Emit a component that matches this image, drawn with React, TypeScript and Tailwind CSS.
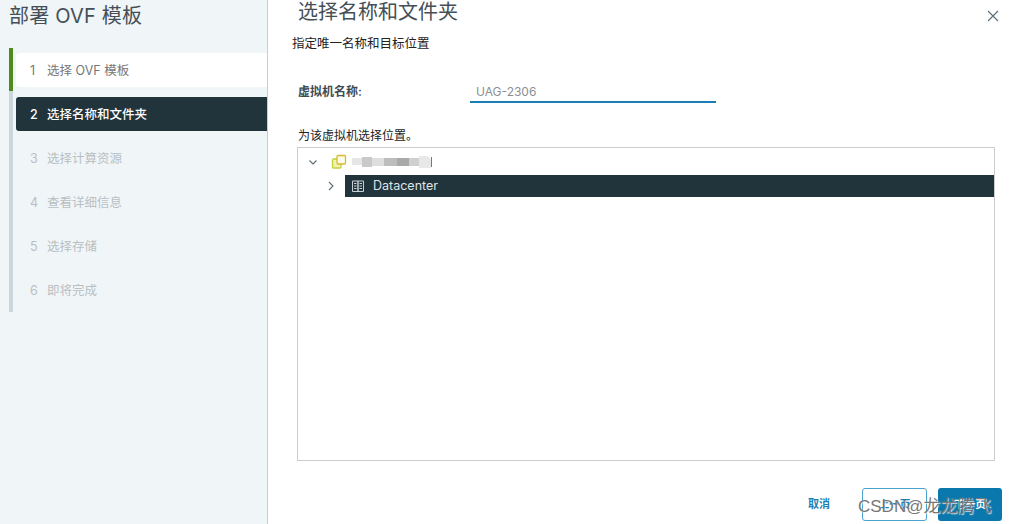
import React from "react";

const font = { fontFamily: 'Inter, "Noto Sans CJK SC", sans-serif' };

function Step({ n, label, state }: { n: number; label: string; state: "done" | "active" | "todo" }) {
  const box =
    state === "active"
      ? "bg-[#21333b] text-white font-medium rounded-l-[3px]"
      : state === "done"
      ? "bg-white text-[#777777] rounded-l-[3px]"
      : "text-[#b9bfc3]";
  return (
    <div className={`h-[34px] flex items-center pl-[14px] pt-[2px] text-[12.5px] leading-none ${box}`}>
      <span className="w-[17px]">{n}</span>
      <span>{label}</span>
    </div>
  );
}

export default function App() {
  return (
    <div style={font} className="relative w-[1010px] h-[524px] overflow-hidden bg-white flex text-[#222222]">
      <aside className="w-[268px] h-full shrink-0 bg-[#f0f5f8] border-r border-[#c5ced4] flex flex-col pl-[9px]">
        <h1 className="mt-[2px] h-[28px] text-[20px] leading-[28px] font-normal tracking-[0.2px] text-[#444f56] whitespace-nowrap">部署 OVF 模板</h1>
        <div className="mt-[18px] flex h-[264px]">
          <div className="w-[4px] h-full bg-[#ccd6db] flex flex-col">
            <div className="h-[43px] bg-[#4e8a1c]" />
          </div>
          <div className="ml-[3px] flex-1 pt-[5px] flex flex-col gap-[10px]">
            <Step n={1} label="选择 OVF 模板" state="done" />
            <Step n={2} label="选择名称和文件夹" state="active" />
            <Step n={3} label="选择计算资源" state="todo" />
            <Step n={4} label="查看详细信息" state="todo" />
            <Step n={5} label="选择存储" state="todo" />
            <Step n={6} label="即将完成" state="todo" />
          </div>
        </div>
      </aside>

      <main className="flex-1 flex flex-col min-w-0 pl-[24px] pr-[16px]">
        <div className="flex items-start justify-between h-[26px] pl-[6px]">
          <h2 className="text-[20px] leading-[24px] font-normal text-[#444f56] whitespace-nowrap">选择名称和文件夹</h2>
          <svg width="12" height="12" viewBox="0 0 12 12" className="mt-[10px] mr-[-5px] text-[#5f7078]" fill="none" stroke="currentColor" strokeWidth="1.2">
            <path d="M1 1l10 10M11 1L1 11" />
          </svg>
        </div>
        <p className="mt-[11px] text-[12.5px] leading-[14px] text-[#222222]">指定唯一名称和目标位置</p>
        <div className="mt-[34px] flex items-start pl-[6px]">
          <label className="w-[172px] text-[12px] leading-[14px] font-semibold text-[#404b52]">虚拟机名称:</label>
          <div className="w-[246px] h-[21px] border-b-2 border-[#1a7fb5] -mt-[3px] pl-[6px] text-[12px] leading-[20px] text-[#8a8f93]">UAG-2306</div>
        </div>
        <p className="mt-[26px] pl-[6px] text-[12px] leading-[14px] text-[#222222]">为该虚拟机选择位置。</p>
        <div className="mt-[4px] ml-[5px] w-[698px] h-[314px] border border-[#cccccc]">
          <div className="h-[27px] flex items-center pl-[10px]">
            <svg width="10" height="10" viewBox="0 0 10 10" fill="none" stroke="#5f6b72" strokeWidth="1.1"><path d="M1.5 3.5L5 7l3.5-3.5" /></svg>
            <svg width="16" height="16" viewBox="0 0 16 16" fill="none" className="ml-[13px]">
              <rect x="1.5" y="5" width="8.5" height="9" rx="1" fill="#eef3b0" stroke="#c3cf3e" strokeWidth="1.3" />
              <rect x="6" y="1.5" width="8.5" height="8.5" rx="1" fill="#fbfbe8" stroke="#d9b92e" strokeWidth="1.3" />
            </svg>
            <div className="ml-[5px] flex items-center h-[12px]">
              <span className="w-[10px] h-[7px] bg-[#e6e6e6]" />
              <span className="w-[10px] h-[10px] bg-[#c9c9c9]" />
              <span className="w-[12px] h-[8px] bg-[#dedede]" />
              <span className="w-[13px] h-[8px] bg-[#bdbdbd]" />
              <span className="w-[12px] h-[8px] bg-[#a9a9a9]" />
              <span className="w-[10px] h-[8px] bg-[#cfcfcf]" />
              <span className="w-[12px] h-[12px] bg-[#e8e8e8] rounded-tr-[5px]" />
              <span className="w-[1px] h-[10px] bg-[#777777]" />
            </div>
          </div>
          <div className="flex items-center h-[22px]">
            <svg width="10" height="10" viewBox="0 0 10 10" fill="none" stroke="#5f6b72" strokeWidth="1.1" className="ml-[28px]"><path d="M3 1l4 4-4 4" /></svg>
            <div className="ml-[9px] flex-1 h-full bg-[#21333b] flex items-center pl-[6px] text-[#dfe5e8] text-[12.5px]">
              <svg width="14" height="14" viewBox="0 0 14 14" fill="none" stroke="#c6d0d5" strokeWidth="1">
                <path d="M1.5 2h5.5v10.5H1.5zM7 2h5.5v10.5H7z" />
                <path d="M3 4.5h2.5M3 7h2.5M3 9.5h2.5M8.5 4.5H11M8.5 7H11M8.5 9.5H11" />
              </svg>
              <span className="ml-[8px]">Datacenter</span>
            </div>
          </div>
        </div>
        <div className="mt-[27px] flex items-center justify-end h-[33px] mr-[-8px]">
          <button className="w-[46px] mr-[20px] text-[11px] font-semibold text-[#1a7fb5]">取消</button>
          <button className="w-[65px] h-[33px] border border-[#4aa3cf] rounded-[3px] text-[10.5px] font-semibold text-[#1a7fb5] mr-[11px]">上一页</button>
          <button className="w-[64px] h-[33px] bg-[#0a78ac] rounded-[3px] text-[10.5px] font-semibold text-white">下一页</button>
        </div>
      </main>

      <div className="absolute left-[858px] top-[497px] text-[17px] leading-[20px] text-[#777777] whitespace-nowrap [font-family:'Liberation_Sans','Noto_Sans_CJK_SC',sans-serif] [text-shadow:1px_1px_1px_rgba(255,255,255,0.8)]">CSDN@龙龙腾飞</div>
    </div>
  );
}
